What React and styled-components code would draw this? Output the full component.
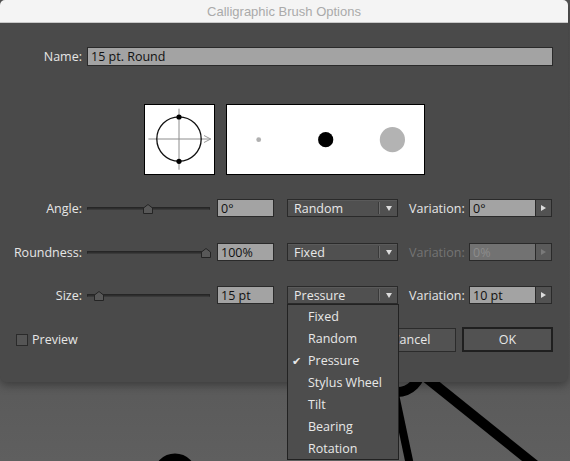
import React from "react";
import styled, { createGlobalStyle } from "styled-components";

const Global = createGlobalStyle`
  html, body { margin: 0; padding: 0; }
  body { background: #5c5c5c; font-family: "Open Sans", "Liberation Sans", sans-serif; }
  #root { width: 570px; height: 461px; }
`;

const Page = styled.div`
  position: relative;
  width: 570px;
  height: 461px;
  overflow: hidden;
  background: linear-gradient(to bottom, #555 0px, #5a5a5a 380px, #5f5f5f 461px);
`;

const CanvasArt = styled.svg`
  position: absolute;
  left: 0;
  top: 0;
  width: 570px;
  height: 461px;
`;

const Dialog = styled.div`
  position: relative;
  z-index: 1;
  width: 568px;
  background: #4a4a4a;
  border-radius: 5px 5px 6px 6px;
  box-shadow: 0 3px 10px rgba(0, 0, 0, 0.35);
`;

const TitleBar = styled.div`
  height: 22px;
  border-radius: 5px 5px 0 0;
  background: #f4f4f4;
  border-bottom: 1px solid #c9c9c9;
  display: flex;
  align-items: center;
  justify-content: center;
  font-family: "Liberation Sans", Arial, sans-serif;
  font-size: 13px;
  color: #aaaaaa;
`;

const Body = styled.div`
  padding: 24px 15px 30px 0;
  display: flex;
  flex-direction: column;
`;

const Row = styled.div`
  display: flex;
  align-items: center;
  height: ${(p) => p.$h || 18}px;
  margin-top: ${(p) => p.$mt || 0}px;
`;

const Label = styled.div`
  width: ${(p) => p.$w || 82}px;
  margin-left: ${(p) => p.$ml || 0}px;
  text-align: right;
  font-size: 12.5px;
  color: ${(p) => (p.$disabled ? "#747474" : "#e6e6e6")};
  white-space: nowrap;
`;

const Field = styled.div`
  box-sizing: border-box;
  width: ${(p) => p.$w}px;
  height: ${(p) => p.$h || 18}px;
  margin-left: ${(p) => p.$ml || 0}px;
  background: ${(p) => (p.$disabled ? "#727272" : "#a3a3a3")};
  border: 1px solid #2a2a2a;
  padding: 0 3px;
  display: flex;
  align-items: center;
  font-size: 12.5px;
  color: ${(p) => (p.$disabled ? "#8c8c8c" : "#111")};
  white-space: nowrap;
`;

const PreviewRow = styled.div`
  margin: 38px 0 0 15px;
  display: flex;
  justify-content: center;
  gap: 11px;
`;

const PreviewBox = styled.div`
  box-sizing: border-box;
  width: ${(p) => p.$w}px;
  height: 71px;
  background: #fff;
  border: 1px solid #000;
  svg { display: block; }
`;

const Params = styled.div`
  display: flex;
  flex-direction: column;
`;

const Slider = styled.div`
  position: relative;
  width: 123px;
  height: 18px;
  margin-left: 5px;
  display: flex;
  align-items: center;
`;

const Track = styled.div`
  width: 100%;
  height: 3px;
  background: #2e2e2e;
  border: 1px solid #262626;
  border-bottom-color: #3a3a3a;
  box-sizing: border-box;
`;

const Thumb = styled.svg`
  position: absolute;
  top: 5px;
  width: 10px;
  height: 10px;
`;

const Select = styled.div`
  position: relative;
  box-sizing: border-box;
  width: 111px;
  height: 18px;
  margin-left: 13px;
  background: #505050;
  border: 1px solid #2a2a2a;
  box-shadow: inset 0 1px 0 #5a5a5a;
  display: flex;
  align-items: center;
  font-size: 12.5px;
  color: #e8e8e8;
`;

const SelectText = styled.span`
  flex: 1;
  padding-left: 6px;
`;

const Divider = styled.span`
  width: 1px;
  height: 12px;
  background: #393939;
  border-right: 1px solid #6a6a6a;
`;

const Caret = styled.span`
  width: 17px;
  display: flex;
  justify-content: center;
  &::after {
    content: "";
    border-left: 3.5px solid transparent;
    border-right: 3.5px solid transparent;
    border-top: 5px solid #dcdcdc;
  }
`;

const StepButton = styled.div`
  box-sizing: border-box;
  width: 16px;
  height: 18px;
  background: ${(p) => (p.$disabled ? "#5a5a5a" : "#525252")};
  border: 1px solid #2a2a2a;
  border-left: none;
  display: flex;
  align-items: center;
  justify-content: center;
  &::after {
    content: "";
    border-top: 3.5px solid transparent;
    border-bottom: 3.5px solid transparent;
    border-left: 5px solid ${(p) => (p.$disabled ? "#7a7a7a" : "#dcdcdc")};
  }
`;

const Menu = styled.div`
  position: absolute;
  left: -1px;
  top: calc(100% + 1px);
  width: 112px;
  box-sizing: border-box;
  background: #4d4d4d;
  border: 1px solid #222;
  z-index: 5;
`;

const MenuItem = styled.div`
  height: 22px;
  display: flex;
  align-items: center;
  font-size: 12.5px;
  color: #e8e8e8;
  position: relative;
  padding-left: 20px;
`;

const Check = styled.span`
  position: absolute;
  left: 4px;
  font-size: 11px;
  color: #e8e8e8;
`;

const Footer = styled.div`
  margin-top: 23px;
  padding-left: 16px;
  display: flex;
  align-items: center;
  height: 25px;
`;

const CheckBox = styled.div`
  box-sizing: border-box;
  width: 12px;
  height: 12px;
  background: #555;
  border: 1px solid #2a2a2a;
`;

const CheckLabel = styled.span`
  margin-left: 4px;
  font-size: 12.5px;
  color: #e6e6e6;
`;

const Spacer = styled.div`
  flex: 1;
`;

const Button = styled.div`
  box-sizing: border-box;
  width: ${(p) => (p.$primary ? 91 : 90)}px;
  height: ${(p) => (p.$primary ? 25 : 24)}px;
  margin-left: ${(p) => (p.$primary ? 6 : 0)}px;
  background: #525252;
  border: ${(p) => (p.$primary ? "2px solid #1f1f1f" : "1px solid #2b2b2b")};
  display: flex;
  align-items: center;
  justify-content: center;
  font-size: 12.5px;
  color: #e8e8e8;
`;

function SliderControl({ pos }) {
  return (
    <Slider>
      <Track />
      <Thumb style={{ left: pos - 5 }} viewBox="0 0 10 10">
        <path d="M0.5 4 L5 0.5 L9.5 4 L9.5 9.5 L0.5 9.5 Z" fill="#585858" stroke="#242424" strokeWidth="1" />
      </Thumb>
    </Slider>
  );
}

const params = [
  { label: "Angle:", mt: 24, thumb: 61, value: "0°", mode: "Random", variation: "0°", disabled: false },
  { label: "Roundness:", mt: 26, thumb: 119, value: "100%", mode: "Fixed", variation: "0%", disabled: true },
  { label: "Size:", mt: 25, thumb: 12, value: "15 pt", mode: "Pressure", variation: "10 pt", disabled: false, menu: true },
];

const menuItems = ["Fixed", "Random", "Pressure", "Stylus Wheel", "Tilt", "Bearing", "Rotation"];

export default function App() {
  return (
    <>
      <Global />
      <Page>
        <CanvasArt viewBox="0 0 570 461">
          <circle cx="397" cy="368" r="24" fill="none" stroke="#000" strokeWidth="10" />
          <line x1="408" y1="363" x2="545" y2="473" stroke="#000" strokeWidth="10" />
          <line x1="392" y1="380" x2="411" y2="470" stroke="#000" strokeWidth="8" />
          <circle cx="175" cy="475" r="17" fill="none" stroke="#000" strokeWidth="9" />
        </CanvasArt>
        <Dialog>
          <TitleBar>Calligraphic Brush Options</TitleBar>
          <Body>
            <Row $h={19}>
              <Label>Name:</Label>
              <Field $w={466} $h={19} $ml={5}>15 pt. Round</Field>
            </Row>
            <PreviewRow>
              <PreviewBox $w={71}>
                <svg width="69" height="69" viewBox="0 0 69 69">
                  <line x1="3.4" y1="34" x2="65.7" y2="34" stroke="#8c8c8c" strokeWidth="1" />
                  <line x1="34" y1="3.7" x2="34" y2="64.7" stroke="#8c8c8c" strokeWidth="1" />
                  <polyline points="59,30.5 65.7,34 59,37.5" fill="none" stroke="#9a9a9a" strokeWidth="1" />
                  <circle cx="34" cy="34" r="22.2" fill="none" stroke="#111" strokeWidth="1.3" />
                  <circle cx="34" cy="12" r="2.6" fill="#000" />
                  <circle cx="34" cy="56.3" r="2.6" fill="#000" />
                </svg>
              </PreviewBox>
              <PreviewBox $w={199}>
                <svg width="197" height="69" viewBox="0 0 197 69">
                  <circle cx="31.7" cy="34.7" r="2.4" fill="#b0b0b0" />
                  <circle cx="98.7" cy="34.7" r="7.6" fill="#000" />
                  <circle cx="165.4" cy="34.7" r="12.6" fill="#b3b3b3" />
                </svg>
              </PreviewBox>
            </PreviewRow>
            <Params>
              {params.map((p) => (
                <Row key={p.label} $mt={p.mt}>
                  <Label>{p.label}</Label>
                  <SliderControl pos={p.thumb} />
                  <Field $w={57} $ml={7}>{p.value}</Field>
                  <Select>
                    <SelectText>{p.mode}</SelectText>
                    <Divider />
                    <Caret />
                    {p.menu && (
                      <Menu>
                        {menuItems.map((m) => (
                          <MenuItem key={m}>
                            {m === p.mode && <Check>✔</Check>}
                            {m}
                          </MenuItem>
                        ))}
                      </Menu>
                    )}
                  </Select>
                  <Label $w={55} $ml={11} $disabled={p.disabled}>Variation:</Label>
                  <Field $w={67} $ml={5} $disabled={p.disabled}>{p.variation}</Field>
                  <StepButton $disabled={p.disabled} />
                </Row>
              ))}
            </Params>
            <Footer>
              <CheckBox />
              <CheckLabel>Preview</CheckLabel>
              <Spacer />
              <Button>Cancel</Button>
              <Button $primary>OK</Button>
            </Footer>
          </Body>
        </Dialog>
      </Page>
    </>
  );
}
